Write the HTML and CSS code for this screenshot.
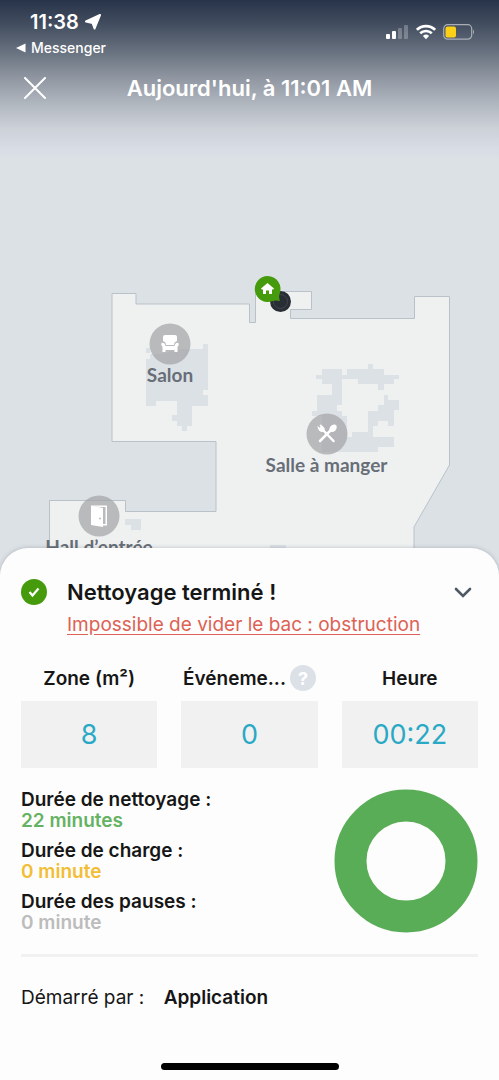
FILE: index.html
```html
<!DOCTYPE html>
<html lang="fr">
<head>
    <meta charset="UTF-8">
    <meta name="viewport" content="width=device-width, initial-scale=1.0">
    <title>Nettoyage terminé</title>
    <link rel="stylesheet" href="styles.css">
</head>
<body>
    <main class="screen">
        <section class="mapArea">
            <svg class="map" viewBox="0 0 499 600" role="img" aria-label="Plan du logement">
                <!-- Floor -->
                <path class="floor" d="M112 293.500H136V304H249.500V322.500H255.500V291.500H311.500V309.500H290.500V318.500H414.500V296.500H449.500V465L414 527V620H49.500V500.500H125.500V511.500H216V441.500H112Z"/>

                <!-- Furniture -->
                <path class="furniture" d="M146 348h4v6h12l18-5h23v-5h5v46h-5v5h5v11h-16v20h-5v5h-5v-5h-5v-5h-5v-6h5v-14h-21v5h-10v-47h4v-6h-4z"/>
                <path class="furniture" d="M322 369H342V375H347V369H368V364H373V369H384V375H399V379H394V384H384V390H378V384H358V379H342V405H337V411H342V416H347V437H352V432H368V411H378V405H384V395H388V400H399V410H394V426H388V421H378V426H373V437H394V447H378V452H322V416H312V411H317V395H332V384H322V379H316V375H322Z"/>
                <path class="furniture" d="M125 519h16v11h-10v-5h-6zM270 545h16v6h-16z"/>

                <!-- Robot -->
                <circle cx="280.500" cy="301.500" r="10.500" fill="#292e35"/>
                <circle cx="280.500" cy="301.500" r="7" fill="none" stroke="#424850"/>
                <!-- Dock -->
                <path d="M267.500 276a13 13 0 0 1 12 18q-1 3 .5 7-5-1-8 .3a13 13 0 1 1-4.500-25.300z" fill="#459b0c"/>
                <path d="M267.500 283l6.500 5.500-1 1.300-1-.6v4.800h-3v-3.500h-3v3.500h-3v-4.800l-1 .6-1-1.300z" fill="#fff"/>

                <!-- Rooms -->
                <g class="room">
                    <circle cx="170" cy="344" r="20.500"/>
                    <path d="M165 335h10q2 0 2 2v4q-3 1-3 4h-8q0-3-3-4v-4q0-2 2-2zM161.500 343q3-1 4 3h9q1-4 4-3 1 2-1 4v5h-3v-2h-9v2h-3v-5q-2-2-1-4z"/>
                    <text x="170" y="382">Salon</text>
                </g>
                <g class="room">
                    <circle cx="327" cy="434" r="20.500"/>
                    <path d="M321 428l12.500 13M333 428l-13 13" fill="none" stroke="#fff" stroke-width="2.500" stroke-linecap="round"/>
                    <path d="M317.500 426l4.500 3.500-2.500-4.500 1.500-.5 3.500 3.500q1 4-2 4-4 0-5-5zM329.500 432q-1-4 2-6.500 3-2 5 0 1 3-1 5t-6 1.500z"/>
                    <text x="326.500" y="472">Salle à manger</text>
                </g>
                <g class="room">
                    <circle cx="99" cy="516" r="20.500"/>
                    <path d="M91 505.500h16v20h-4v-1.500h2.500v-17h-6zM91 505.500l12 2.500v19l-12-2z"/>
                    <circle cx="100" cy="518.500" r="1" class="knob"/>
                    <text x="99" y="554">Hall d’entrée</text>
                </g>
            </svg>

            <div class="statusBar">
                <div class="clock">
                    <span class="time">11:38
                        <svg width="16" height="16" viewBox="0 0 16 16"><path d="M15 1L9.500 14.500 7.500 9 1 7.500z" fill="#fff" stroke="#fff" stroke-width="2" stroke-linejoin="round"/></svg>
                    </span>
                    <a class="backLink" href="#"><svg width="10" height="10" viewBox="0 0 10 10"><path d="M0 5L9.500.5v9z" fill="#fff"/></svg>Messenger</a>
                </div>
                <div class="indicators">
                    <svg width="23" height="16" viewBox="0 0 23 16" fill="#fff">
                        <rect x="0" y="10" width="4" height="5" rx="1"/>
                        <rect x="6" y="7" width="4" height="8" rx="1"/>
                        <g opacity=".25"><rect x="12" y="4" width="4" height="11" rx="1"/><rect x="18" y="1" width="4" height="14" rx="1"/></g>
                    </svg>
                    <svg width="20" height="16" viewBox="0 0 20 16" fill="none" stroke="#fff" stroke-width="2.600">
                        <path d="M.9 5.800a13 13 0 0 1 18.200 0M4.200 9.300a8.300 8.300 0 0 1 11.600 0"/>
                        <path d="M10 15.200L6.900 12a4.500 4.500 0 0 1 6.200 0z" fill="#fff" stroke="none"/>
                    </svg>
                    <svg width="32" height="16" viewBox="0 0 32 16">
                        <rect x=".7" y=".7" width="28" height="14.500" rx="4" fill="none" stroke="#a9aeb5" stroke-width="1.200"/>
                        <rect x="2.500" y="2.500" width="10.500" height="11" rx="2" fill="#fbd015"/>
                        <path d="M30 5.500q2 2.500 0 5z" fill="#a9aeb5"/>
                    </svg>
                </div>
            </div>

            <header class="titleBar">
                <button class="closeButton" type="button" aria-label="Fermer">
                    <svg width="22" height="22" viewBox="0 0 22 22"><path d="M1 1l20 20M21 1L1 21" stroke="#fff" stroke-width="2" stroke-linecap="round"/></svg>
                </button>
                <h1>Aujourd'hui, à 11:01 AM</h1>
            </header>
        </section>

        <section class="sheet">
            <div class="summary">
                <svg class="done" width="26" height="26" viewBox="0 0 26 26"><circle cx="13" cy="13" r="13" fill="#459b0c"/><path d="M8.500 13l3 3.500 6-7" fill="none" stroke="#fff" stroke-width="2.200"/></svg>
                <h2>Nettoyage terminé !</h2>
                <button class="collapseButton" type="button" aria-label="Réduire">
                    <svg width="18" height="12" viewBox="0 0 18 12"><path d="M2 3l7 7 7-7" fill="none" stroke="#4d5965" stroke-width="2.600" stroke-linecap="round"/></svg>
                </button>
                <a class="errorLink" href="#">Impossible de vider le bac : obstruction</a>
            </div>

            <dl class="stats">
                <div class="stat">
                    <dt>Zone (m²)</dt>
                    <dd>8</dd>
                </div>
                <div class="stat">
                    <dt>Événeme...<button class="helpButton" type="button" aria-label="Aide">?</button></dt>
                    <dd>0</dd>
                </div>
                <div class="stat">
                    <dt>Heure</dt>
                    <dd>00:22</dd>
                </div>
            </dl>

            <div class="breakdown">
                <dl class="durations">
                    <div>
                        <dt>Durée de nettoyage :</dt>
                        <dd class="cleaning">22 minutes</dd>
                    </div>
                    <div>
                        <dt>Durée de charge :</dt>
                        <dd class="charging">0 minute</dd>
                    </div>
                    <div>
                        <dt>Durée des pauses :</dt>
                        <dd class="paused">0 minute</dd>
                    </div>
                </dl>
                <svg class="donut" width="144" height="144" viewBox="0 0 144 144"><circle cx="72" cy="72" r="55.500" fill="none" stroke="#5aad57" stroke-width="32"/></svg>
            </div>

            <p class="startedBy">Démarré par : <strong>Application</strong></p>
            <div class="homeBar"></div>
        </section>
    </main>
</body>
</html>
```
FILE: styles.css
```css
* {
    box-sizing: border-box;
    margin: 0;
    padding: 0;
}

body {
    font-family: Inter, "Liberation Sans", sans-serif;
    color: #161616;
    background-color: #dce1e6;
}

button {
    border: none;
    background: none;
    cursor: pointer;
}

svg {
    display: block;
}

.screen {
    display: flex;
    flex-direction: column;
    min-height: 100vh;
}

/* Map */
.mapArea {
    position: relative;
    flex: 1;
    overflow: hidden;
    background: linear-gradient(#28344a 0, #434e60 25px, #656f7d 50px, #8d949f 76px, #b2b8c0 105px, #ccd1d8 128px, #d7dce5 148px, #dce1e6 160px);
}

.map {
    position: absolute;
    top: 0;
    left: 0;
    width: 100%;
}

.floor {
    fill: #eff1f1;
    stroke: #b9c2c9;
}

.furniture {
    fill: #dce1e6;
}

.room circle {
    fill: #a2a3a5;
    fill-opacity: 0.7;
}

.room path {
    fill: #fff;
}

.room .knob {
    fill: #a2a3a5;
}

.room text {
    font-family: Lato, sans-serif;
    font-size: 19px;
    font-weight: 700;
    fill: #686e77;
    text-anchor: middle;
}

/* Header */
.statusBar {
    position: relative;
    display: flex;
    justify-content: space-between;
    padding: 10px 24px 0 16px;
    color: #fff;
}

.time {
    display: flex;
    align-items: center;
    gap: 6px;
    padding-left: 14px;
    font-size: 20px;
    font-weight: 600;
    line-height: 24px;
}

.backLink {
    display: flex;
    align-items: center;
    gap: 5px;
    font-size: 14px;
    font-weight: 500;
    line-height: 28px;
    color: #fff;
    text-decoration: none;
}

.indicators {
    display: flex;
    gap: 7px;
    padding-top: 14px;
}

.titleBar {
    position: relative;
    display: grid;
    grid-template-columns: 22px 1fr 22px;
    align-items: center;
    padding: 12px 24px;
    color: #fff;
}

.titleBar h1 {
    font-size: 22px;
    font-weight: 600;
    line-height: 28px;
    text-align: center;
}

/* Bottom sheet */
.sheet {
    position: relative;
    margin-top: -28px;
    padding: 29px 21px 10px;
    border-radius: 28px 28px 0 0;
    background-color: #fdfdfd;
    box-shadow: 0 0 4px rgba(60, 70, 80, 0.3);
}

.summary {
    display: grid;
    grid-template-columns: 26px 1fr 18px;
    column-gap: 20px;
    align-items: center;
    padding-right: 6px;
}

.summary h2 {
    font-size: 22px;
    font-weight: 600;
    line-height: 30px;
}

.errorLink {
    grid-column: 2 / 4;
    font-size: 19px;
    line-height: 36px;
    color: #dc6255;
    text-underline-offset: 3px;
}

.stats {
    display: grid;
    grid-template-columns: repeat(3, 1fr);
    gap: 24px;
    margin-top: 21px;
    text-align: center;
}

.stat dt {
    display: flex;
    align-items: center;
    justify-content: center;
    gap: 4px;
    height: 28px;
    margin-bottom: 9px;
    font-size: 19px;
    font-weight: 600;
}

.stat dd {
    background-color: #f1f1f1;
    font-size: 27px;
    line-height: 67px;
    color: #29a9c5;
}

.helpButton {
    flex: none;
    width: 26px;
    height: 26px;
    border-radius: 50%;
    background-color: #dce1e8;
    color: #fff;
    font: 700 18px Inter, sans-serif;
}

.breakdown {
    display: flex;
    justify-content: space-between;
    align-items: center;
    padding: 21px 0;
    border-bottom: 3px solid #f1f1f1;
}

.durations {
    display: grid;
    gap: 9px;
    font-size: 19px;
    font-weight: 600;
    line-height: 21px;
}

.cleaning {
    color: #64b363;
}

.charging {
    color: #f3bd35;
}

.paused {
    color: #bcbcbc;
}

.startedBy {
    margin-top: 29px;
    font-size: 19px;
    line-height: 24px;
}

.startedBy strong {
    margin-left: 14px;
    font-weight: 600;
}

.homeBar {
    width: 178px;
    height: 7px;
    margin: 53px auto 0;
    border-radius: 4px;
    background-color: #000;
}
```
